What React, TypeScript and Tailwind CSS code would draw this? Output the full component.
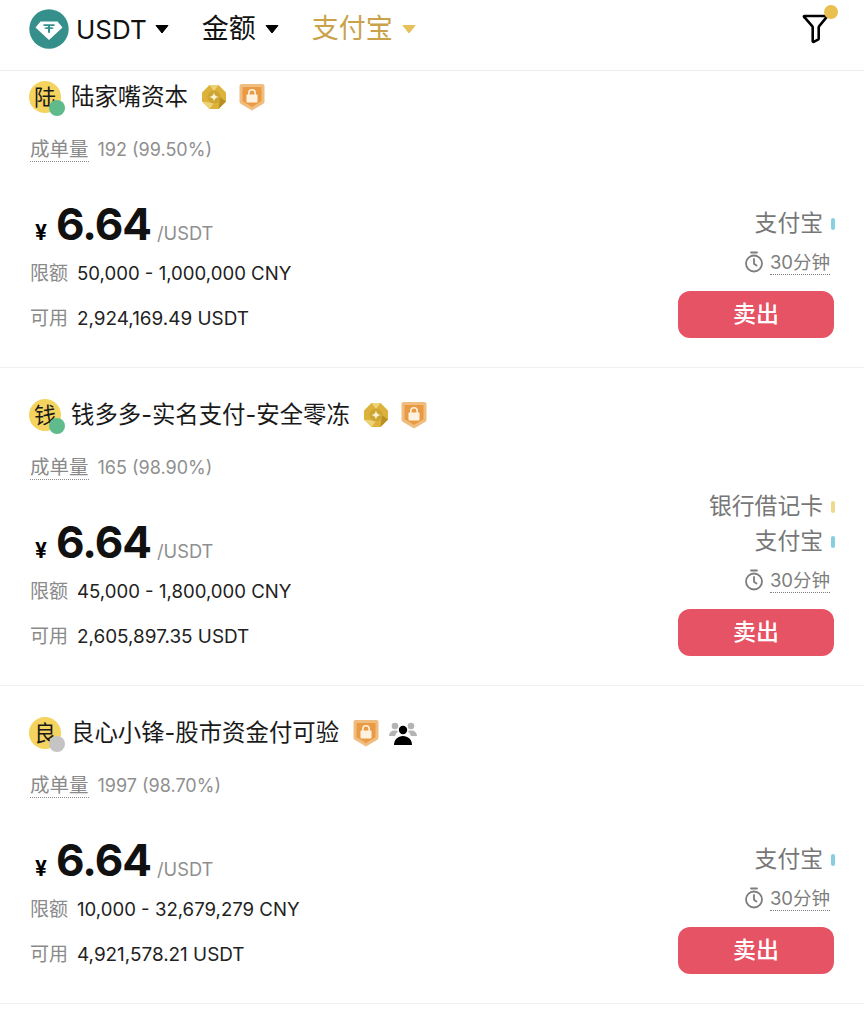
import React from "react";

const CJK = "font-['Inter','Noto_Sans_CJK_SC',sans-serif]";

function Caret({ gold }: { gold?: boolean }) {
  return (
    <svg width="14" height="10" viewBox="0 0 14 10" className={gold ? "text-[#e6c15a]" : "text-black"}>
      <path d="M1 1.500h12L7 9z" fill="currentColor" stroke="currentColor" strokeWidth="1" strokeLinejoin="round" />
    </svg>
  );
}

function TetherLogo() {
  return (
    <svg width="40" height="40" viewBox="0 0 40 40">
      <circle cx="20" cy="20" r="19.700" fill="#35908c" />
      <path d="M11.500 12.500h17l5 6L20 31 6.500 18.500z" fill="#fff" />
      <path d="M14.500 15.300h11v1.700h-4.500v1.300c2 .1 3.700.4 3.700.9s-1.700.8-3.700.9v3.600h-2v-3.600c-2-.1-3.700-.4-3.700-.9s1.700-.8 3.700-.9V17h-4.500z" fill="#35908c" />
    </svg>
  );
}

function FilterIcon() {
  return (
    <svg width="26" height="30" viewBox="0 0 26 30" fill="none">
      <path d="M2.500 2h21c.8 0 1.300 1 .7 1.700l-7 8.500a2 2 0 0 0-.5 1.300v11c0 .5-.3.800-.7 1.100l-4.300 2.200c-.6.300-1-.1-1-.7V13.500a2 2 0 0 0-.5-1.300l-7.400-8.500C1.700 3 1.700 2 2.500 2z" stroke="#000" strokeWidth="2.600" strokeLinejoin="round" />
    </svg>
  );
}

function GoldBadge() {
  return (
    <svg width="26" height="26" viewBox="0 0 26 26">
      <path d="M8.500 1h9L25 8.500v9L17.500 25h-9L1 17.500v-9z" fill="#dcb23a" />
      <path d="M8.500 1h9L13 7zM1 17.500L8.500 25l4.500-6z" fill="#eed27a" />
      <path d="M17.500 25l7.500-7.500L19 13z" fill="#b88f24" />
      <circle cx="13" cy="13" r="6.500" fill="#cda532" />
      <path d="M13 8c.5 3.400 1.600 4.500 5 5-3.400.5-4.500 1.600-5 5-.5-3.400-1.600-4.500-5-5 3.400-.5 4.500-1.600 5-5z" fill="#fbf2cf" />
    </svg>
  );
}

function LockBadge() {
  return (
    <svg width="28" height="28" viewBox="0 0 28 28">
      <path d="M3.500 1h21c1 0 2 .8 2 2v15.500c0 1.300-.5 2-1.500 2.600L14 27.500 3 21.100c-1-.6-1.500-1.300-1.500-2.600V3c0-1.200 1-2 2-2z" fill="#f0bd80" />
      <path d="M4.500 4h19v14.200L14 24l-9.500-5.800z" fill="#e99b44" />
      <rect x="8.500" y="11.500" width="11" height="8" rx="1" fill="#fdf1df" />
      <path d="M10.800 12V10a3.200 3.200 0 0 1 6.400 0v2" fill="none" stroke="#fdf1df" strokeWidth="1.600" />
    </svg>
  );
}

function PeopleIcon() {
  return (
    <svg width="28" height="26" viewBox="0 0 28 26">
      <circle cx="6" cy="6" r="3.300" fill="#b4b4b4" />
      <circle cx="22" cy="6" r="3.300" fill="#b4b4b4" />
      <path d="M0 16c0-3.500 2.500-5.500 6-5.500 1.500 0 2.500.4 3 1-1.500 1.200-2.500 2.700-2.800 4.500z" fill="#b4b4b4" />
      <path d="M28 16c0-3.500-2.500-5.500-6-5.500-1.500 0-2.500.4-3 1 1.500 1.200 2.500 2.700 2.800 4.500z" fill="#b4b4b4" />
      <circle cx="14" cy="10" r="4.200" fill="#000" />
      <path d="M5 25c0-5.500 4-9 9-9s9 3.500 9 9z" fill="#000" />
    </svg>
  );
}

function TimerIcon() {
  return (
    <svg width="20" height="22" viewBox="0 0 20 22" fill="none" stroke="#7d7d7d" strokeWidth="1.800" strokeLinecap="round">
      <circle cx="10" cy="12.500" r="8" />
      <path d="M7 1.500h6M10 8v4.800l2.500 1.700" />
    </svg>
  );
}

type Card = {
  initial: string;
  dot: string;
  name: string;
  badges: React.ReactNode;
  stats: string;
  limit: string;
  avail: string;
  methods: { label: string; color: string }[];
  first?: boolean;
};

const cards: Card[] = [
  {
    initial: "陆",
    dot: "#5fbb8b",
    name: "陆家嘴资本",
    badges: (
      <>
        <GoldBadge />
        <LockBadge />
      </>
    ),
    stats: "192 (99.50%)",
    limit: "50,000 - 1,000,000 CNY",
    avail: "2,924,169.49 USDT",
    methods: [{ label: "支付宝", color: "#86cfe0" }],
    first: true,
  },
  {
    initial: "钱",
    dot: "#5fbb8b",
    name: "钱多多-实名支付-安全零冻",
    badges: (
      <>
        <GoldBadge />
        <LockBadge />
      </>
    ),
    stats: "165 (98.90%)",
    limit: "45,000 - 1,800,000 CNY",
    avail: "2,605,897.35 USDT",
    methods: [
      { label: "银行借记卡", color: "#eed98a" },
      { label: "支付宝", color: "#86cfe0" },
    ],
  },
  {
    initial: "良",
    dot: "#c4c4c4",
    name: "良心小锋-股市资金付可验",
    badges: (
      <>
        <LockBadge />
        <span className="-ml-[2px]"><PeopleIcon /></span>
      </>
    ),
    stats: "1997 (98.70%)",
    limit: "10,000 - 32,679,279 CNY",
    avail: "4,921,578.21 USDT",
    methods: [{ label: "支付宝", color: "#86cfe0" }],
  },
];

function MerchantCard({ c }: { c: Card }) {
  return (
    <div className={`border-b border-[#f1f1f1] pl-[29px] pr-[30px] pb-[29px] ${c.first ? "pt-[10px]" : "pt-[31px]"}`}>
      <div className="flex items-center h-[32px]">
        <div className="relative w-[32px] h-[32px] rounded-full bg-[#f4d35e] flex items-center justify-center text-[22px] leading-none text-[#1a1a1a]">
          {c.initial}
          <span className="absolute left-[20px] top-[19px] w-[16px] h-[16px] rounded-full" style={{ backgroundColor: c.dot }} />
        </div>
        <div className="ml-[10px] text-[23.400px] leading-[32px] text-[#1a1a1a] whitespace-nowrap">{c.name}</div>
        <div className="ml-[13px] flex items-center gap-[11px]">{c.badges}</div>
      </div>

      <div className="mt-[22px] flex items-center h-[28px]">
        <span className="ml-[1px] text-[19.500px] leading-[24px] text-[#8a8a8a] border-b border-dotted border-[#8a8a8a]">成单量</span>
        <span className="ml-[9px] text-[18px] text-[#8f8f8f]">{c.stats}</span>
      </div>

      <div className="flex justify-between items-end">
        <div className="pt-[32px] pb-[5px]">
          <div className="flex items-baseline h-[58px] pl-[6px]">
            <span className="text-[21px] font-bold text-black">¥</span>
            <span className="ml-[9px] text-[44px] font-bold leading-[58px] tracking-[-1px] text-[#111]">6.64</span>
            <span className="ml-[6px] text-[18.300px] text-[#8f8f8f]">/USDT</span>
          </div>
          <div className="mt-[7px] flex items-center h-[28px] pl-[1px]">
            <span className="text-[19px] text-[#8a8a8a] w-[47px]">限额</span>
            <span className="text-[18.600px] text-[#222]">{c.limit}</span>
          </div>
          <div className="mt-[17px] flex items-center h-[28px] pl-[1px]">
            <span className="text-[19px] text-[#8a8a8a] w-[47px]">可用</span>
            <span className="text-[18.900px] text-[#222]">{c.avail}</span>
          </div>
        </div>
        <div className="flex flex-col items-end">
          {c.methods.map((m) => (
            <div key={m.label} className="flex items-center h-[35px] -mr-[1px] text-[22.800px] text-[#777]">
              {m.label}
              <span className="ml-[8px] w-[4px] h-[12px] rounded-full" style={{ backgroundColor: m.color }} />
            </div>
          ))}
          <div className="mt-[7px] flex items-center pr-[4px] h-[28px]">
            <TimerIcon />
            <span className="ml-[6px] text-[18.500px] leading-[24px] text-[#7d7d7d] border-b border-dotted border-[#7d7d7d]">30分钟</span>
          </div>
          <button className="mt-[15px] w-[156px] h-[47px] rounded-[12px] bg-[#e65365] text-white text-[23px] font-medium">卖出</button>
        </div>
      </div>
    </div>
  );
}

export default function App() {
  return (
    <div className={`w-[864px] h-[1024px] bg-white overflow-hidden ${CJK}`}>
      <div className="h-[71px] border-b border-[#ececec] pl-[29px] pr-[29px] pt-[9px] flex items-start justify-between relative">
        <div className="flex items-center h-[40px]">
          <TetherLogo />
          <span className="ml-[7px] text-[26px] text-[#111]">USDT</span>
          <span className="ml-[8px]"><Caret /></span>
          <span className="ml-[33px] text-[27px] text-[#111]">金额</span>
          <span className="ml-[9px]"><Caret /></span>
          <span className="ml-[33px] text-[27px] text-[#c9a24a]">支付宝</span>
          <span className="ml-[9px]"><Caret gold /></span>
        </div>
        <div className="relative mt-[5px] mr-[7px]">
          <FilterIcon />
          <span className="absolute left-[22px] top-[-9px] w-[14px] h-[14px] rounded-full bg-[#e9bf4f]" />
        </div>
      </div>
      {cards.map((c) => (
        <MerchantCard key={c.name} c={c} />
      ))}
    </div>
  );
}
